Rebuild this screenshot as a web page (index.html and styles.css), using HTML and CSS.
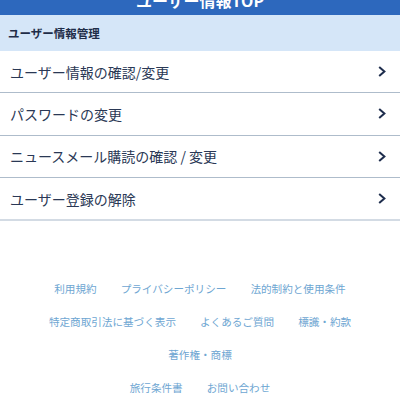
FILE: index.html
```html
<!DOCTYPE html>
<html lang="ja">
<head>
<meta charset="utf-8">
<link rel="stylesheet" href="styles.css">
</head>
<body>
<header class="topbar"><h1 class="title">ユーザー情報TOP</h1></header>
<div class="section">ユーザー情報管理</div>
<ul class="menu">
  <li class="item"><span class="label">ユーザー情報の確認/変更</span><svg class="chev" viewBox="0 0 8 11" width="8" height="11"><polyline points="1.2,1 6.4,5.5 1.2,10" fill="none" stroke="#1e2d4d" stroke-width="2"/></svg></li>
  <li class="item"><span class="label">パスワードの変更</span><svg class="chev" viewBox="0 0 8 11" width="8" height="11"><polyline points="1.2,1 6.4,5.5 1.2,10" fill="none" stroke="#1e2d4d" stroke-width="2"/></svg></li>
  <li class="item"><span class="label">ニュースメール購読の確認 / 変更</span><svg class="chev" viewBox="0 0 8 11" width="8" height="11"><polyline points="1.2,1 6.4,5.5 1.2,10" fill="none" stroke="#1e2d4d" stroke-width="2"/></svg></li>
  <li class="item last"><span class="label">ユーザー登録の解除</span><svg class="chev" viewBox="0 0 8 11" width="8" height="11"><polyline points="1.2,1 6.4,5.5 1.2,10" fill="none" stroke="#1e2d4d" stroke-width="2"/></svg></li>
</ul>
<footer class="footer">
  <div class="frow"><a>利用規約</a><a>プライバシーポリシー</a><a>法的制約と使用条件</a></div>
  <div class="frow"><a>特定商取引法に基づく表示</a><a>よくあるご質問</a><a>標識・約款</a></div>
  <div class="frow"><a>著作権・商標</a></div>
  <div class="frow"><a>旅行条件書</a><a>お問い合わせ</a></div>
</footer>
</body>
</html>
```
FILE: styles.css
```css
html, body {
  margin: 0;
  padding: 0;
  background: #ffffff;
  font-family: "Noto Sans CJK JP", "Noto Sans", sans-serif;
}
.topbar {
  height: 15px;
  background: #2d68bd;
  overflow: hidden;
  display: flex;
  justify-content: center;
}
.title {
  margin: -8px 0 0 0;
  font-size: 16px;
  line-height: 16px;
  font-weight: bold;
  color: #ffffff;
}
.section {
  height: 36px;
  background: #d5e6f8;
  display: flex;
  align-items: center;
  padding-left: 8px;
  font-size: 11.5px;
  font-weight: bold;
  color: #1f2d48;
}
.menu {
  list-style: none;
  margin: 0;
  padding: 0;
}
.item {
  height: 41.33px;
  border-bottom: 1px solid #aebccb;
  display: flex;
  align-items: center;
  justify-content: space-between;
  padding: 0 14px 0 10px;
}
.item.last {
  border-bottom: 2px solid #d3dbe4;
}
.label {
  font-size: 14px;
  color: #2a3855;
}
.chev {
  display: block;
}
.footer {
  margin-top: 51px;
  display: flex;
  flex-direction: column;
}
.frow {
  height: 33px;
  display: flex;
  justify-content: center;
  align-items: center;
  gap: 24px;
}
.frow a {
  font-size: 10.6px;
  color: #6ea6d2;
}
```
